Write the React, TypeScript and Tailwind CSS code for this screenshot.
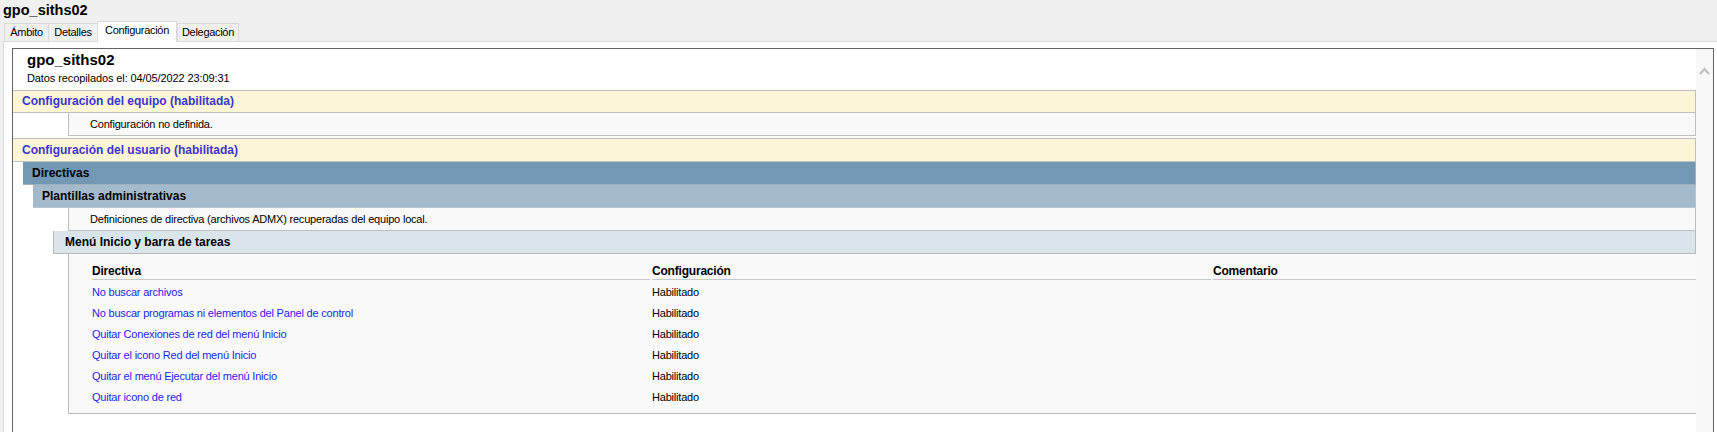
const tabs = [
  { label: 'Ámbito', w: 'w-[44px]' },
  { label: 'Detalles', w: 'w-[49px]' },
  { label: 'Configuración', w: 'w-[80px]', active: true },
  { label: 'Delegación', w: 'w-[62px]' },
];

const rows = [
  'No buscar archivos',
  'No buscar programas ni elementos del Panel de control',
  'Quitar Conexiones de red del menú Inicio',
  'Quitar el icono Red del menú Inicio',
  'Quitar el menú Ejecutar del menú Inicio',
  'Quitar icono de red',
];

function Tabs() {
  return (
    <div className="flex h-[20px] items-end pl-[4px]">
      {tabs.map((t) =>
        t.active ? (
          <div
            key={t.label}
            className={`${t.w} relative z-10 -mb-px h-[21px] border-x border-t border-[#d9d9d9] bg-white pt-[1px] text-center text-[11px] leading-[15px] tracking-[-0.3px]`}
          >
            {t.label}
          </div>
        ) : (
          <div
            key={t.label}
            className={`${t.w} h-[18px] border-l border-t border-[#d9d9d9] bg-[#f0f0f0] text-center text-[11px] leading-[17px] tracking-[-0.3px] last:border-r`}
          >
            {t.label}
          </div>
        ),
      )}
    </div>
  );
}

export default function App() {
  return (
    <div className="h-[432px] w-[1717px] overflow-hidden bg-[#f0f0f0] font-['Liberation_Sans',Arial,sans-serif] text-black">
      <div className="h-[21px] pl-[3px] pt-[1px] text-[14.5px] font-bold leading-[18px]">gpo_siths02</div>
      <Tabs />

      {/* Tab panel */}
      <div className="ml-[3px] h-[420px] border-l border-t border-[#d9d9d9] bg-white pl-[8px] pr-[3px] pt-[6px]">
        <div className="flex h-[420px] border-x border-t border-[#646464]">
          {/* Report */}
          <div className="min-w-0 flex-1 bg-white">
            <div className="pb-[5px] pl-[14px] pt-[2px]">
              <div className="text-[15px] font-bold leading-[18px]">gpo_siths02</div>
              <div className="mt-[2px] text-[11px] leading-[14px] tracking-[-0.1px]">
                Datos recopilados el: 04/05/2022 23:09:31
              </div>
            </div>

            <div className="h-[23px] border-y border-r border-[#bfbfbf] bg-[#fdf6d6] pl-[9px] text-[12px] font-bold leading-[21px] text-[#3b35d0]">
              Configuración del equipo (habilitada)
            </div>
            <div className="ml-[55px] h-[23px] border-b border-l border-r border-[#c0c0c0] bg-[#f9f9f9] pl-[21px] text-[11px] leading-[22px] tracking-[-0.2px]">
              Configuración no definida.
            </div>

            <div className="mt-[2px] h-[24px] border-y border-r border-[#bfbfbf] bg-[#fdf6d6] pl-[9px] text-[12px] font-bold leading-[22px] text-[#3b35d0]">
              Configuración del usuario (habilitada)
            </div>
            <div className="ml-[10px] h-[23px] border-b border-r border-[#9fb0bf] bg-[#7398b4] pl-[9px] text-[12px] font-bold leading-[22px]">
              Directivas
            </div>
            <div className="ml-[20px] h-[23px] border-b border-r border-[#b8c6d2] bg-[#a3b9cc] pl-[9px] text-[12px] font-bold leading-[22px]">
              Plantillas administrativas
            </div>
            <div className="ml-[55px] h-[23px] border-b border-l border-r border-[#c0c0c0] bg-[#f9f9f9] pl-[21px] text-[11px] leading-[22px] tracking-[-0.2px]">
              Definiciones de directiva (archivos ADMX) recuperadas del equipo local.
            </div>
            <div className="ml-[40px] h-[23px] border-b border-l border-r border-[#b9b9b9] bg-[#d9e4eb] pl-[11px] text-[12px] font-bold leading-[22px]">
              Menú Inicio y barra de tareas
            </div>

            {/* Policy table */}
            <div className="ml-[55px] border-b border-l border-[#bdbdbd] bg-[#f9f9f9] pb-[5px] pl-[23px] pt-[9px]">
              <div className="grid grid-cols-[560px_561px_1fr] text-[12px] font-bold leading-[16px] tracking-[-0.2px]">
                <div className="mr-[2px] h-[17px] border-b border-[#c8c8c8]">Directiva</div>
                <div className="mr-[2px] h-[17px] border-b border-[#c8c8c8]">Configuración</div>
                <div className="h-[17px] border-b border-[#c8c8c8]">Comentario</div>
              </div>
              <div className="mt-[2px] text-[11px] leading-[21px] tracking-[-0.2px]">
                {rows.map((r) => (
                  <div key={r} className="grid h-[21px] grid-cols-[560px_561px_1fr]">
                    <div className="text-[#1f1ff0]">{r}</div>
                    <div>Habilitado</div>
                    <div />
                  </div>
                ))}
              </div>
            </div>
          </div>

          {/* Scrollbar */}
          <div className="w-[17px] bg-[#f8f8f8] pl-[3px] pt-[18px]">
            <svg width="11" height="8" viewBox="0 0 11 8">
              <polyline points="1,7 5.5,2 10,7" fill="none" stroke="#c2c2c2" strokeWidth="2.4" />
            </svg>
          </div>
        </div>
      </div>
    </div>
  );
}
